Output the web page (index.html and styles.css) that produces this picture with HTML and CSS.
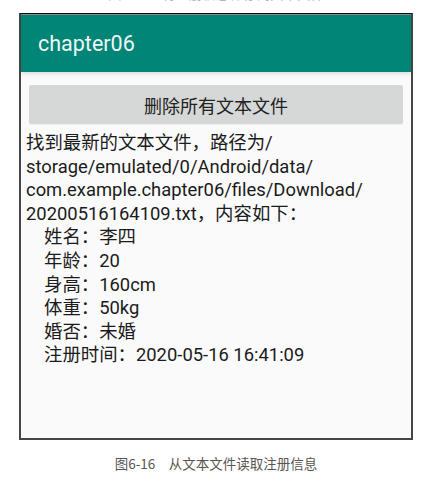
FILE: index.html
```html
<!DOCTYPE html>
<html lang="zh">
<head>
<meta charset="utf-8">
<title>chapter06</title>
<link rel="stylesheet" href="styles.css">
</head>
<body>
<div class="page">
  <div class="prev-caption"><span>图6-15　将注册信息保存到文本文件</span></div>
  <div class="phone">
    <header class="appbar"><span class="title">chapter06</span></header>
    <main class="content">
      <button class="btn">删除所有文本文件</button>
      <div class="result">
        <span class="line">找到最新的文本文件，路径为/</span>
        <span class="line">storage/emulated/0/Android/data/</span>
        <span class="line">com.example.chapter06/files/Download/</span>
        <span class="line">20200516164109.txt，内容如下：</span>
        <span class="line indent">姓名：李四</span>
        <span class="line indent">年龄：20</span>
        <span class="line indent">身高：160cm</span>
        <span class="line indent">体重：50kg</span>
        <span class="line indent">婚否：未婚</span>
        <span class="line indent">注册时间：2020-05-16 16:41:09</span>
      </div>
    </main>
  </div>
  <div class="caption">图6-16　从文本文件读取注册信息</div>
</div>
</body>
</html>
```

FILE: styles.css
```css
html, body {
  margin: 0;
  padding: 0;
  background: #ffffff;
}

.page {
  width: 394px;
  margin-left: 19px;
  font-family: Roboto, "Noto Sans CJK SC", sans-serif;
}

.prev-caption {
  height: 13px;
  overflow: hidden;
  display: flex;
  align-items: flex-end;
  justify-content: center;
  font-family: "Noto Sans CJK SC", sans-serif;
  font-size: 13.5px;
  color: #b5b5b5;
}

.prev-caption span {
  line-height: 14px;
  margin-bottom: 13px;
}

.phone {
  box-sizing: border-box;
  height: 427px;
  border: 2px solid #464646;
  border-top: 1px solid #0d0d0d;
  display: flex;
  flex-direction: column;
  background: #fafafa;
}

.appbar {
  height: 57px;
  border-top: 1px solid #8a8a8a;
  background: #008577;
  display: flex;
  align-items: center;
  padding-left: 17px;
  box-shadow: 0 2px 4px rgba(0, 0, 0, 0.12);
  position: relative;
}

.title {
  color: #eef7f5;
  font-family: Roboto, sans-serif;
  font-size: 21.5px;
  margin-top: -1px;
}

.content {
  flex: 1;
  display: flex;
  flex-direction: column;
}

.btn {
  margin: 13px 8px 0 8px;
  height: 39px;
  border: none;
  border-radius: 2px;
  background: #d6d7d7;
  color: #222222;
  font-family: Roboto, "Noto Sans CJK SC", sans-serif;
  font-size: 18px;
  padding: 0;
  box-shadow: 0 1px 1px rgba(0, 0, 0, 0.05);
}

.result {
  padding: 7px 0 0 5px;
  color: #1b1b1b;
  font-size: 18.4px;
  line-height: 23.6px;
}

.line {
  display: block;
  white-space: nowrap;
}

.indent {
  padding-left: 18px;
}

.caption {
  margin-top: 14px;
  text-align: center;
  font-family: "Noto Sans CJK SC", sans-serif;
  font-size: 13.5px;
  line-height: 18px;
  color: #5a5552;
}
```
